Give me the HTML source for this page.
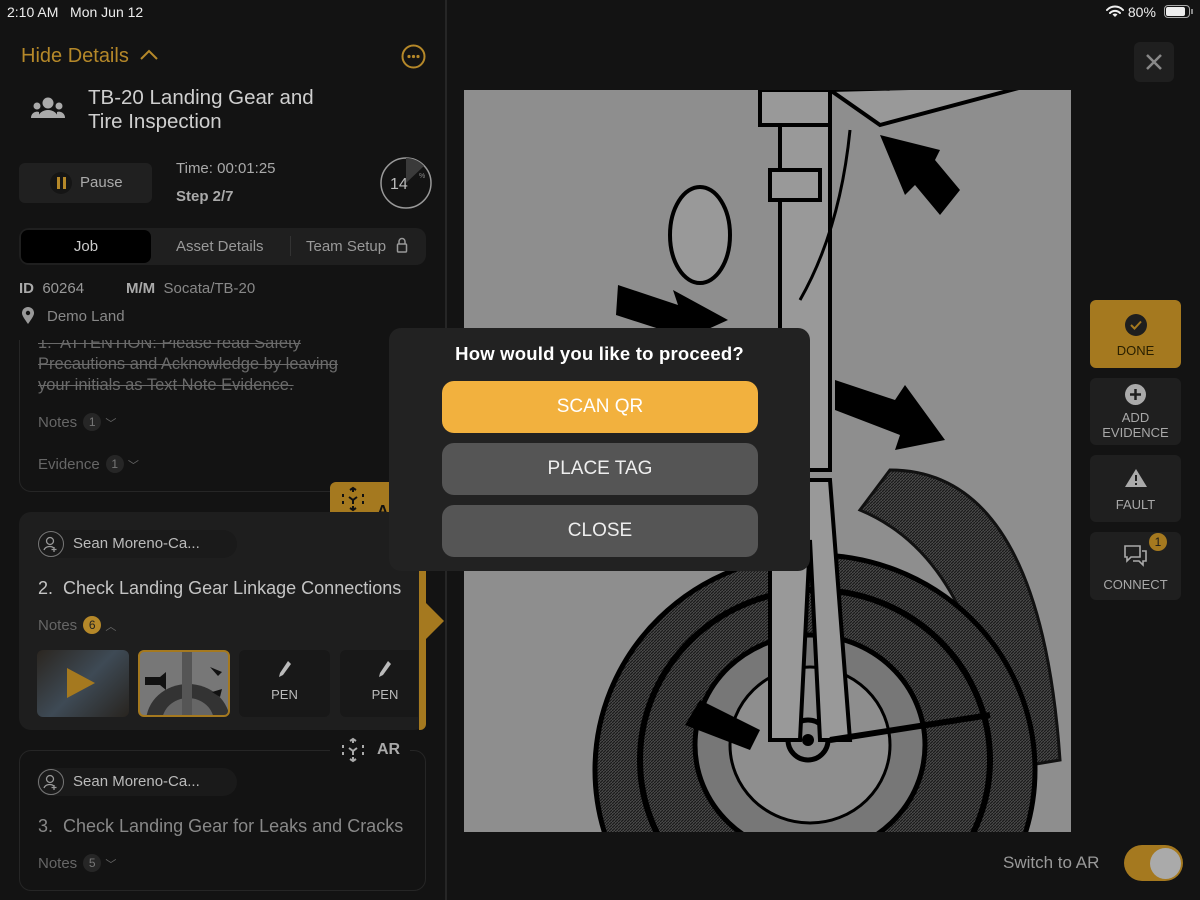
<!DOCTYPE html>
<html><head><meta charset="utf-8"><style>
*{margin:0;padding:0;box-sizing:border-box}
html,body{width:1200px;height:900px;overflow:hidden}
body{background:#131313;font-family:"Liberation Sans",sans-serif;position:relative;color:#ccc}
.a{position:absolute;white-space:nowrap}
.card{position:absolute;border:1px solid #262626;border-radius:12px}
.badge{display:inline-block;width:18px;height:18px;border-radius:9px;background:#262626;color:#777;font-size:12px;text-align:center;line-height:18px;margin-left:6px;vertical-align:1px}
.sb{position:absolute;left:1090px;width:91px;border-radius:6px;background:#1f1f1f;text-align:center;color:#a8a8a8;font-size:13px;line-height:15px}
.mbtn{position:absolute;left:442px;width:316px;height:52px;border-radius:12px;background:#555;color:#eee;font-size:19px;text-align:center;line-height:52px}
.pill{position:absolute;left:37px;width:200px;height:28px;border-radius:14px;background:#1a1a1a;color:#bbb;font-size:15px;line-height:28px;padding-left:36px}
.pill svg{position:absolute;left:0;top:0}
.thumb{position:absolute;top:650px;height:67px;border-radius:6px;background:#181818;color:#bbb;font-size:13px;text-align:center}
</style></head><body>
<!-- status bar -->
<div class="a" style="left:7px;top:4px;font-size:14px;color:#eee">2:10 AM&nbsp;&nbsp; Mon Jun 12</div>
<div class="a" style="left:1106px;top:4px;font-size:14px;color:#eee">
<svg width="18" height="13" viewBox="0 0 18 13" style="vertical-align:-1px"><path d="M1 5a11 11 0 0 1 16 0M4 8a7 7 0 0 1 10 0" stroke="#eee" stroke-width="2" fill="none" stroke-linecap="round"/><path d="M9 12l-2.5-2.5a3.5 3.5 0 0 1 5 0z" fill="#eee"/></svg> 80%</div>
<div class="a" style="left:1164px;top:5px;width:26px;height:13px;border:1px solid #aaa;border-radius:4px"><div style="margin:1px;width:19px;height:9px;background:#eee;border-radius:2px"></div></div>
<div class="a" style="left:1191px;top:9px;width:2px;height:5px;background:#888"></div>

<!-- left panel -->
<div class="a" style="left:445px;top:0;width:2px;height:900px;background:#262626"></div>
<div class="a" style="left:21px;top:45px;font-size:20px;color:#b58829">Hide Details</div>
<svg class="a" style="left:139px;top:49px" width="20" height="12"><path d="M2 10l8-8 8 8" stroke="#b58829" stroke-width="2" fill="none"/></svg>
<svg class="a" style="left:401px;top:44px" width="25" height="25"><circle cx="12.5" cy="12.5" r="11" stroke="#b58829" stroke-width="2" fill="none"/><circle cx="8" cy="12.5" r="1.6" fill="#b58829"/><circle cx="12.5" cy="12.5" r="1.6" fill="#b58829"/><circle cx="17" cy="12.5" r="1.6" fill="#b58829"/></svg>
<svg class="a" style="left:30px;top:96px" width="36" height="24"><circle cx="18" cy="7" r="5.5" fill="#aaa"/><circle cx="7" cy="10" r="3.5" fill="#aaa"/><circle cx="29" cy="10" r="3.5" fill="#aaa"/><path d="M8 22a10 8 0 0 1 20 0z" fill="#aaa"/><path d="M1 22a6 6 0 0 1 8-6v6zM35 22a6 6 0 0 0-8-6v6z" fill="#aaa"/></svg>
<div class="a" style="left:88px;top:86px;font-size:20.5px;line-height:24px;color:#cfcfcf">TB-20 Landing Gear and<br>Tire Inspection</div>
<div class="a" style="left:19px;top:163px;width:133px;height:40px;background:#202020;border-radius:6px"></div>
<div class="a" style="left:50px;top:172px;width:22px;height:22px;border-radius:50%;background:#151515"></div>
<div class="a" style="left:57px;top:177px;width:3px;height:12px;background:#b58829"></div><div class="a" style="left:63px;top:177px;width:3px;height:12px;background:#b58829"></div>
<div class="a" style="left:80px;top:174px;font-size:15px;color:#aaa">Pause</div>
<div class="a" style="left:176px;top:160px;font-size:15px;color:#aaa">Time: 00:01:25</div>
<div class="a" style="left:176px;top:188px;font-size:15px;color:#aaa;font-weight:bold">Step 2/7</div>
<svg class="a" style="left:374px;top:156px" width="64" height="54"><circle cx="32" cy="27" r="25" stroke="#999" stroke-width="1.5" fill="none"/><path d="M32 27V2A25 25 0 0 1 50 10z" fill="#3a3a3a"/><text x="16" y="33" font-size="16" fill="#bbb" font-family="Liberation Sans">14</text><text x="45" y="22" font-size="7" fill="#888" font-family="Liberation Sans">%</text></svg>
<div class="a" style="left:19px;top:228px;width:407px;height:37px;background:#1f1f1f;border-radius:10px"></div>
<div class="a" style="left:21px;top:230px;width:130px;height:33px;background:#000;border-radius:7px;color:#ccc;font-size:15px;text-align:center;line-height:33px">Job</div>
<div class="a" style="left:176px;top:238px;font-size:15px;color:#999">Asset Details</div>
<div class="a" style="left:290px;top:236px;width:1px;height:20px;background:#333"></div>
<div class="a" style="left:306px;top:238px;font-size:15px;color:#999">Team Setup</div>
<svg class="a" style="left:396px;top:237px" width="12" height="17"><path d="M3 7V4.5a3 3 0 0 1 6 0V7" stroke="#999" stroke-width="1.5" fill="none"/><rect x="1.5" y="7" width="9" height="8" rx="1" stroke="#999" stroke-width="1.5" fill="none"/></svg>
<div class="a" style="left:19px;top:280px;font-size:15px;color:#999"><b style="color:#aaa">ID</b>&nbsp; 60264</div>
<div class="a" style="left:126px;top:280px;font-size:15px;color:#888"><b style="color:#aaa">M/M</b>&nbsp; Socata/TB-20</div>
<svg class="a" style="left:21px;top:307px" width="14" height="18"><path d="M7 17C2 10 1 8 1 6a6 6 0 0 1 12 0c0 2-1 4-6 11z" fill="#999"/><circle cx="7" cy="6" r="2.2" fill="#131313"/></svg>
<div class="a" style="left:47px;top:308px;font-size:15px;color:#888">Demo Land</div>

<!-- card 1 -->
<div class="card" style="left:19px;top:340px;width:407px;height:152px;border-top:none;border-radius:0 0 12px 12px"></div>
<div class="a" style="left:0;top:340px;width:445px;height:60px;overflow:hidden">
<div class="a" style="left:38px;top:-7px;font-size:16.5px;line-height:21px;color:#6a6a6a;text-decoration:line-through">1.&nbsp; ATTENTION: Please read Safety<br>Precautions and Acknowledge by leaving<br>your initials as Text Note Evidence.</div></div>
<div class="a" style="left:38px;top:413px;font-size:15px;color:#666">Notes<span class="badge">1</span> <span style="font-size:11px">﹀</span></div>
<div class="a" style="left:38px;top:455px;font-size:15px;color:#666">Evidence<span class="badge">1</span> <span style="font-size:11px">﹀</span></div>

<!-- card 2 -->
<div class="a" style="left:330px;top:482px;width:70px;height:30px;background:#a5791f;border-radius:6px 6px 0 0"></div>
<svg class="a" style="left:340px;top:486px" width="26" height="26"><g stroke="#111" stroke-width="2" fill="none"><path d="M13 2v4M10 4l3-2 3 2M13 24v-4M10 22l3 2 3-2M3 8v3M23 8v3M3 15v3M23 15v3M9 11l4 3 4-3M13 14v4"/></g></svg>
<div class="a" style="left:377px;top:503px;font-size:16px;color:#111;font-weight:bold">A</div>
<div class="a" style="left:19px;top:512px;width:407px;height:218px;background:#1e1e1e;border-radius:12px"></div>
<div class="a" style="left:419px;top:548px;width:7px;height:182px;background:#a5791f;border-radius:0 0 6px 0"></div>
<div class="a" style="left:426px;top:603px;width:0;height:0;border-top:18px solid transparent;border-bottom:18px solid transparent;border-left:18px solid #a5791f"></div>
<div class="pill" style="top:530px"><svg width="28" height="28"><circle cx="14" cy="14" r="12.5" stroke="#777" fill="none"/><circle cx="13" cy="11" r="3.5" stroke="#999" stroke-width="1.3" fill="none"/><path d="M7 20a6 5 0 0 1 10-2M17 17v5M14.5 19.5h5" stroke="#999" stroke-width="1.3" fill="none"/></svg>Sean Moreno-Ca...</div>
<div class="a" style="left:38px;top:578px;font-size:18px;color:#c4c4c4">2.&nbsp; Check Landing Gear Linkage Connections</div>
<div class="a" style="left:38px;top:616px;font-size:15px;color:#666">Notes<span class="badge" style="background:#b58829;color:#222">6</span> <span style="font-size:11px">︿</span></div>
<div class="thumb" style="left:37px;width:92px;background:linear-gradient(135deg,#2b2620,#3e4a55 50%,#28241f);overflow:hidden">
<div style="position:absolute;left:30px;top:18px;width:0;height:0;border-top:15px solid transparent;border-bottom:15px solid transparent;border-left:28px solid #a5791f"></div></div>
<div class="thumb" style="left:138px;width:92px;background:#777;border:2px solid #a5791f;overflow:hidden">
<svg width="88" height="63"><ellipse cx="48" cy="70" rx="42" ry="38" fill="#333"/><ellipse cx="48" cy="70" rx="26" ry="24" fill="#666"/><rect x="42" y="0" width="10" height="70" fill="#555"/><path d="M5 25h15l6-5v18l-6-5H5z" fill="#111"/><path d="M70 15l12 5-4 4zM72 40l10-3-2 8z" fill="#111"/></svg></div>
<div class="thumb" style="left:239px;width:91px"><svg style="margin-top:10px" width="14" height="18"><path d="M10 1l3 3-8 11-4 2 1-4z" fill="#bbb"/></svg><div style="margin-top:6px">PEN</div></div>
<div class="thumb" style="left:340px;width:78px;border-radius:6px 0 0 6px"><svg style="margin-top:10px;margin-left:12px" width="14" height="18"><path d="M10 1l3 3-8 11-4 2 1-4z" fill="#bbb"/></svg><div style="margin-top:6px;padding-left:12px">PEN</div></div>

<!-- card 3 -->
<div class="card" style="left:19px;top:750px;width:407px;height:141px"></div>
<div class="a" style="left:330px;top:736px;width:80px;height:28px;background:#131313"></div>
<svg class="a" style="left:340px;top:737px" width="26" height="26"><g stroke="#aaa" stroke-width="2" fill="none"><path d="M13 2v4M10 4l3-2 3 2M13 24v-4M10 22l3 2 3-2M3 8v3M23 8v3M3 15v3M23 15v3M9 11l4 3 4-3M13 14v4"/></g></svg>
<div class="a" style="left:377px;top:741px;font-size:16px;color:#aaa;font-weight:bold">AR</div>
<div class="pill" style="top:768px"><svg width="28" height="28"><circle cx="14" cy="14" r="12.5" stroke="#777" fill="none"/><circle cx="13" cy="11" r="3.5" stroke="#999" stroke-width="1.3" fill="none"/><path d="M7 20a6 5 0 0 1 10-2M17 17v5M14.5 19.5h5" stroke="#999" stroke-width="1.3" fill="none"/></svg>Sean Moreno-Ca...</div>
<div class="a" style="left:38px;top:816px;font-size:18px;color:#888">3.&nbsp; Check Landing Gear for Leaks and Cracks</div>
<div class="a" style="left:38px;top:854px;font-size:15px;color:#666">Notes<span class="badge">5</span> <span style="font-size:11px">﹀</span></div>

<!-- image -->
<div class="a" style="left:464px;top:90px;width:607px;height:742px;background:#8e8e8e;overflow:hidden">
<svg width="607" height="742" viewBox="464 90 607 742">
<defs><pattern id="h" width="3" height="3" patternUnits="userSpaceOnUse"><rect width="3" height="3" fill="#4a4a4a"/><path d="M0 3L3 0" stroke="#1a1a1a" stroke-width="1.2"/></pattern></defs>
<path d="M890 470q150 0 170 290l-60 10q-20-210-140-260z" fill="url(#h)" stroke="#111" stroke-width="3"/>
<ellipse cx="815" cy="770" rx="220" ry="215" fill="url(#h)" stroke="#000" stroke-width="5"/>
<ellipse cx="815" cy="760" rx="175" ry="170" fill="none" stroke="#000" stroke-width="6"/>
<ellipse cx="810" cy="745" rx="115" ry="110" fill="#777" stroke="#000" stroke-width="5"/>
<ellipse cx="810" cy="745" rx="80" ry="78" fill="#8e8e8e" stroke="#000" stroke-width="3"/>
<circle cx="808" cy="740" r="20" fill="#888" stroke="#000" stroke-width="5"/>
<circle cx="808" cy="740" r="6" fill="#000"/>
<path d="M770 480h60l20 260h-30l-10-200-10 200h-30z" fill="#999" stroke="#000" stroke-width="4"/>
<path d="M780 90h50v380h-50z" fill="#999" stroke="#000" stroke-width="4"/>
<path d="M760 90h70v35h-70zM770 170h50v30h-50z" fill="#999" stroke="#000" stroke-width="4"/>
<path d="M830 90l200-5-150 40z" fill="#999" stroke="#000" stroke-width="4"/>
<path d="M850 130q-10 100-50 170" stroke="#000" stroke-width="3" fill="none"/>
<ellipse cx="700" cy="235" rx="30" ry="48" fill="#999" stroke="#000" stroke-width="4"/>
<path d="M880 135l60 15-5 10 25 30-20 25-25-30-10 10z" fill="#000"/>
<path d="M618 285l60 20-5-15 55 30-55 25 5-10-62-20z" fill="#000"/>
<path d="M835 380l60 20 10-15 40 55-50 10 5-15-65-25z" fill="#000"/>
<path d="M700 700l60 30-10 20-65-25z" fill="#000"/>
<path d="M830 740l160-25" stroke="#000" stroke-width="6"/>
</svg></div>

<!-- right controls -->
<div class="a" style="left:1134px;top:42px;width:40px;height:40px;background:#1f1f1f;border-radius:6px"></div>
<svg class="a" style="left:1145px;top:53px" width="18" height="18"><path d="M2 2l14 14M16 2L2 16" stroke="#888" stroke-width="2.5"/></svg>
<div class="sb" style="top:300px;height:68px;background:#a5791f;color:#2a2000"><svg style="margin-top:14px" width="22" height="22"><circle cx="11" cy="11" r="11" fill="#1e1e1e"/><path d="M6 11l3.5 3.5L16 7.5" stroke="#a5791f" stroke-width="2" fill="none"/></svg><div style="margin-top:4px">DONE</div></div>
<div class="sb" style="top:378px;height:67px"><svg style="margin-top:6px" width="21" height="21"><circle cx="10.5" cy="10.5" r="10.5" fill="#aaa"/><path d="M10.5 5v11M5 10.5h11" stroke="#1f1f1f" stroke-width="2.5"/></svg><div style="margin-top:2px">ADD<br>EVIDENCE</div></div>
<div class="sb" style="top:455px;height:67px"><svg style="margin-top:13px" width="24" height="20"><path d="M12 1L23 19H1z" fill="#aaa"/><path d="M12 7v6M12 15v2" stroke="#1f1f1f" stroke-width="2"/></svg><div style="margin-top:6px">FAULT</div></div>
<div class="sb" style="top:532px;height:68px"><svg style="margin-top:12px" width="26" height="24"><path d="M2 2h15v11H8l-4 4v-4H2z" stroke="#aaa" stroke-width="1.6" fill="none"/><path d="M19 7h4v10h-3v4l-4-4h-6" stroke="#aaa" stroke-width="1.6" fill="none"/></svg><div style="margin-top:6px">CONNECT</div></div>
<div class="a" style="left:1149px;top:533px;width:18px;height:18px;border-radius:9px;background:#a5791f;color:#1a1a1a;font-size:12px;text-align:center;line-height:18px">1</div>
<div class="a" style="left:1003px;top:853px;font-size:17px;color:#999">Switch to AR</div>
<div class="a" style="left:1124px;top:845px;width:59px;height:36px;border-radius:18px;background:#a5791f"></div>
<div class="a" style="left:1150px;top:848px;width:31px;height:31px;border-radius:50%;background:#aaa"></div>

<!-- modal -->
<div class="a" style="left:389px;top:328px;width:421px;height:243px;background:#222;border-radius:12px"></div>
<div class="a" style="left:389px;top:343px;width:421px;text-align:center;font-size:18.5px;color:#fff;font-weight:bold;letter-spacing:0.2px">How would you like to proceed?</div>
<div class="mbtn" style="top:381px;background:#f2b13e;color:#fff">SCAN QR</div>
<div class="mbtn" style="top:443px">PLACE TAG</div>
<div class="mbtn" style="top:505px">CLOSE</div>
</body></html>
